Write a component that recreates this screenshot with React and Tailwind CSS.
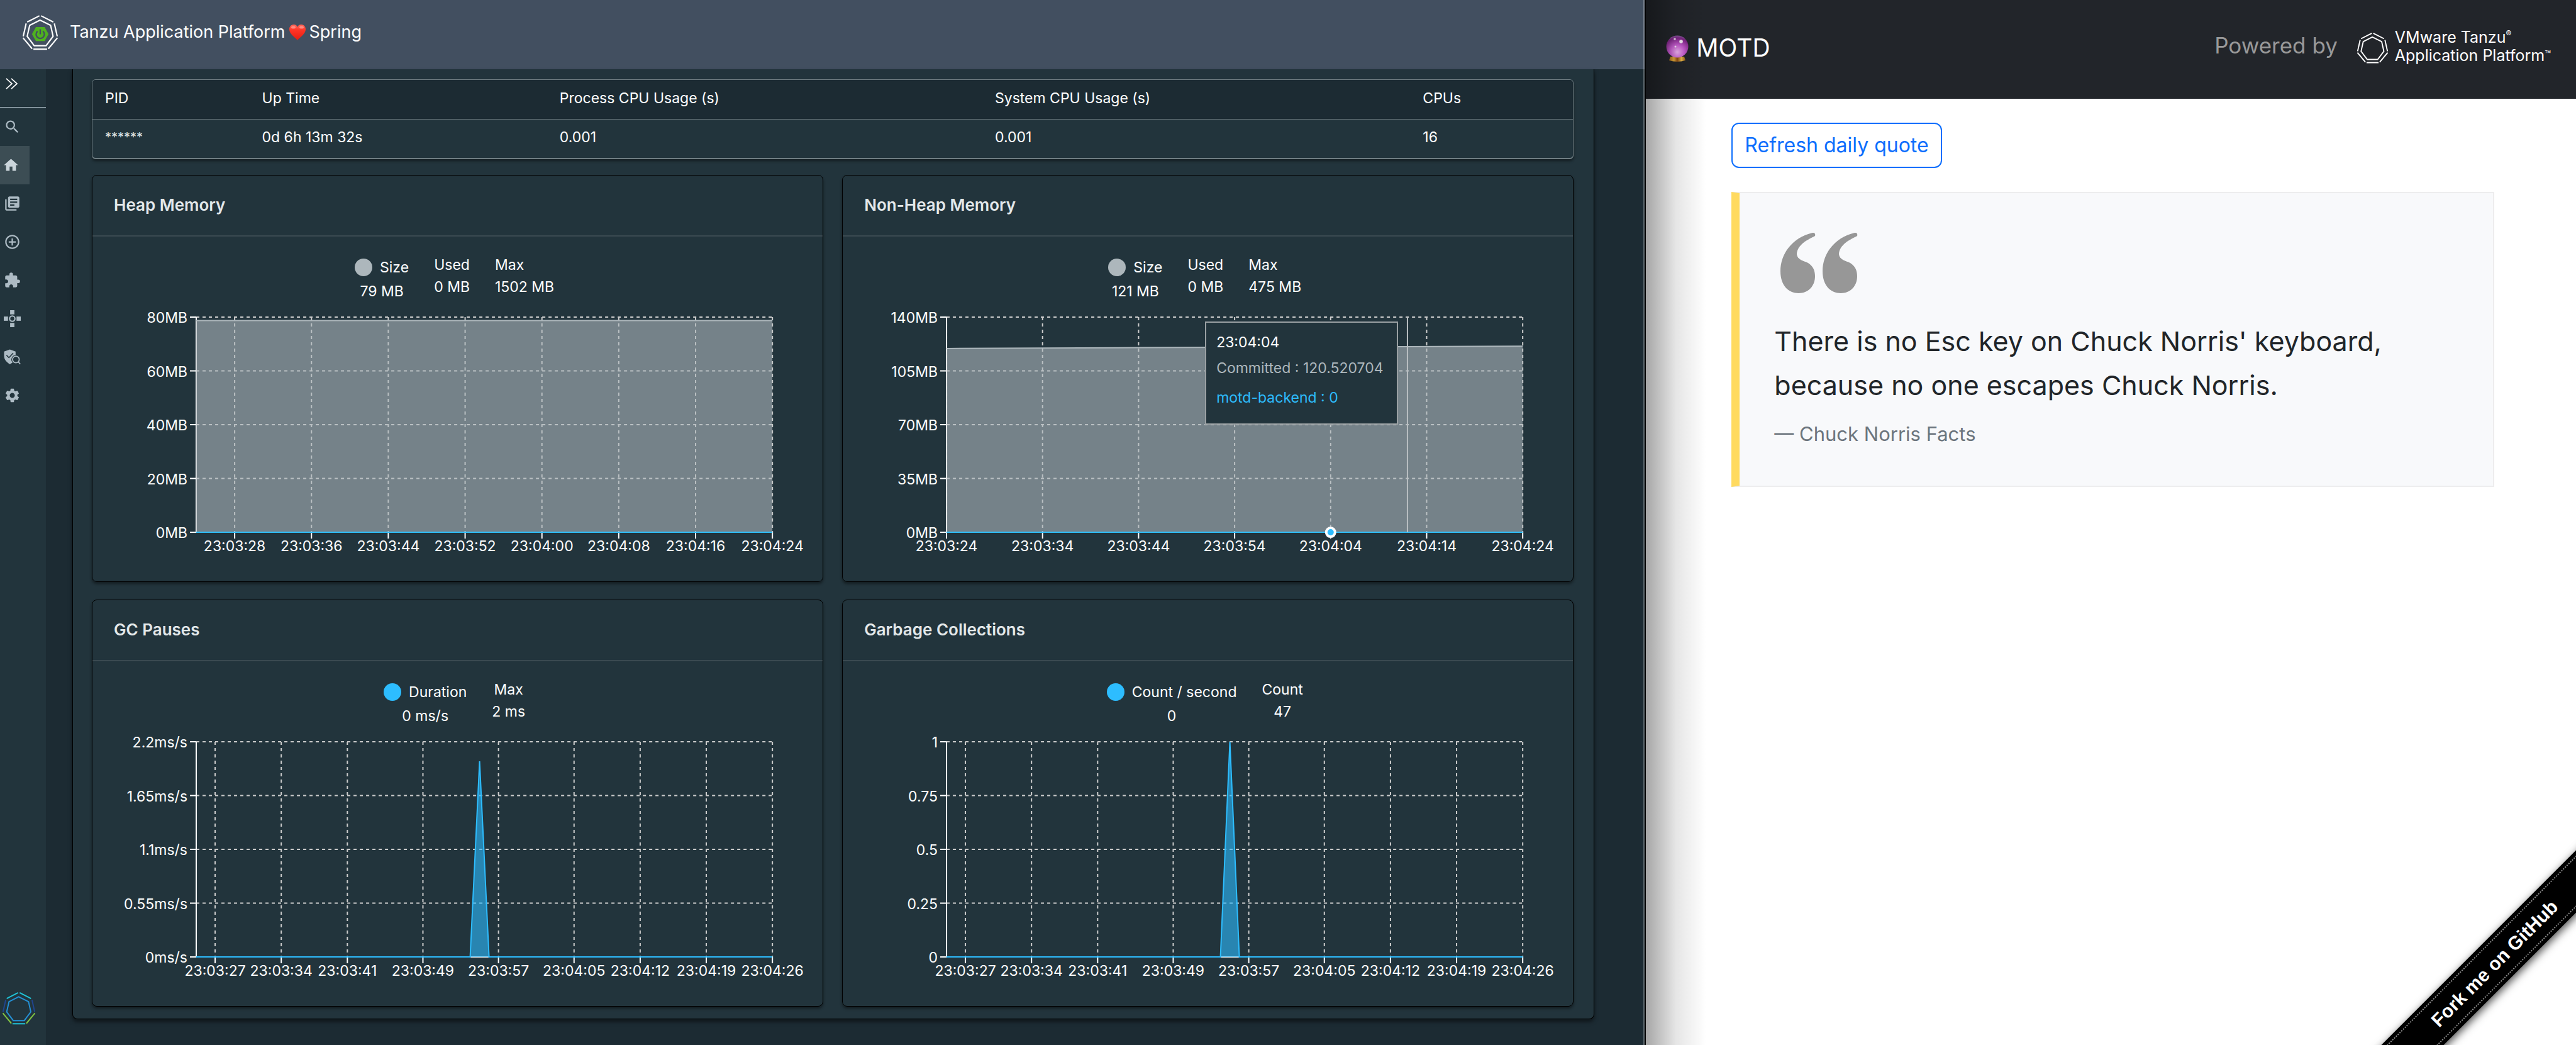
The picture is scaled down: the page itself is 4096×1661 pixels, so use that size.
import React from "react";
import { MdSearch, MdHome, MdLibraryBooks, MdAddCircleOutline, MdExtension, MdSettings } from "react-icons/md";

const HEPTAGON = "M87 27 L138 52 L150 105 L116 150 L59 150 L25 105 L37 52 Z";

function TanzuLogo({ className, top, side, low, inner, children }) {
  return (
    <svg viewBox="0 0 176 172" className={className} fill="none" strokeWidth="6.5" aria-hidden="true">
      <path d="M84 6 L25 36 M92 6 L151 36 M55 167 L121 167" stroke={top} />
      <path d="M20 43 L6 105 M156 43 L170 105" stroke={side} />
      <path d="M5 112 L49 165 M171 112 L127 165" stroke={low} />
      <path d={HEPTAGON} stroke={inner} />
      {children}
    </svg>
  );
}

function WhiteTanzuLogo({ className, children }) {
  return (
    <TanzuLogo className={className} top="#fff" side="#fff" low="#fff" inner="#fff">
      {children}
    </TanzuLogo>
  );
}

function Heart() {
  return (
    <svg viewBox="0 0 26 25" className="h-[25px] w-[26px]" aria-label="love" role="img">
      <defs>
        <linearGradient id="heart" x1="0" y1="0" x2="0" y2="1">
          <stop offset="0" stopColor="#ff6a5c" />
          <stop offset="0.35" stopColor="#ff3526" />
          <stop offset="1" stopColor="#e51c10" />
        </linearGradient>
      </defs>
      <path d="M13 25 C9 20 0 15 0 7.500 C0 3 3.200 0 7 0 C10 0 12 1.600 13 4 C14 1.600 16 0 19 0 C22.800 0 26 3 26 7.500 C26 15 17 20 13 25 Z" fill="url(#heart)" />
      <ellipse cx="6.500" cy="4.500" rx="3.500" ry="2" fill="#fff" opacity="0.350" />
      <ellipse cx="19.500" cy="4.500" rx="3.500" ry="2" fill="#fff" opacity="0.350" />
    </svg>
  );
}

function CrystalBall() {
  return (
    <svg viewBox="0 0 36 42" className="h-[42px] w-9" aria-hidden="true">
      <defs>
        <radialGradient id="ball" cx="0.5" cy="0.75" r="0.8">
          <stop offset="0" stopColor="#f0b4f2" />
          <stop offset="0.4" stopColor="#c95fd2" />
          <stop offset="0.8" stopColor="#7d2485" />
          <stop offset="1" stopColor="#8d6fa8" />
        </radialGradient>
        <linearGradient id="stand" x1="0" x2="1">
          <stop offset="0" stopColor="#a8701c" />
          <stop offset="0.3" stopColor="#e0a83a" />
          <stop offset="0.5" stopColor="#8f4d12" />
          <stop offset="0.75" stopColor="#e6b649" />
          <stop offset="1" stopColor="#9a6518" />
        </linearGradient>
      </defs>
      <path d="M7 34 H29 L31 40 Q18 44 5 40 Z" fill="url(#stand)" />
      <circle cx="18" cy="18" r="17.500" fill="url(#ball)" />
      <circle cx="24" cy="10" r="2.800" fill="#fff" opacity="0.900" />
      <circle cx="14" cy="6" r="1.800" fill="#fff" opacity="0.800" />
      <circle cx="15" cy="18" r="1.500" fill="#fff" opacity="0.800" />
    </svg>
  );
}

function ChevronsIcon() {
  return (
    <svg viewBox="0 0 20 19" className="h-[18px] w-[19px]" fill="none" stroke="#fff" strokeWidth="1.800" aria-hidden="true">
      <path d="M1 1 L10.500 9.500 L1 18 M9.500 1 L19 9.500 L9.500 18" />
    </svg>
  );
}

function TopologyIcon({ className }) {
  return (
    <svg viewBox="0 0 28 28" className={className} fill="currentColor" aria-hidden="true">
      <rect x="10.500" y="0" width="7" height="7" />
      <rect x="10.500" y="21" width="7" height="7" />
      <rect x="0" y="10.500" width="7" height="7" />
      <rect x="21" y="10.500" width="7" height="7" />
      <circle cx="14" cy="14" r="4.400" fill="none" stroke="currentColor" strokeWidth="2.200" />
    </svg>
  );
}

function ShieldSearchIcon({ className }) {
  return (
    <svg viewBox="0 0 28 26" className={className} aria-hidden="true">
      <path d="M10 0.500 L19.500 4 V9.500 A7.500 7.500 0 0 0 14.500 22 L10 25 C4 21 0.500 17 0.500 11 V4 Z" fill="currentColor" />
      <path d="M4.500 10 L8.500 14 L15.500 6.500" fill="none" stroke="#22343c" strokeWidth="1.600" />
      <circle cx="20" cy="17" r="5.500" fill="none" stroke="currentColor" strokeWidth="1.800" />
      <path d="M23.800 21 L27.200 24.500" stroke="currentColor" strokeWidth="1.800" />
    </svg>
  );
}

const NAV = [
  { label: "Search", Icon: MdSearch },
  { label: "Home", Icon: MdHome, active: true },
  { label: "Docs", Icon: MdLibraryBooks },
  { label: "Create", Icon: MdAddCircleOutline },
  { label: "Plugins", Icon: MdExtension },
  { label: "Supply chains", Icon: TopologyIcon },
  { label: "Security", Icon: ShieldSearchIcon },
  { label: "Settings", Icon: MdSettings },
];

function Sidebar() {
  return (
    <aside className="flex w-[73px] shrink-0 flex-col bg-[#22343c]">
      <button type="button" aria-label="Expand" className="flex h-[61px] items-start border-b border-[#b4c3cc] pt-3.5 pl-[9px]">
        <ChevronsIcon />
      </button>
      <nav className="flex flex-col">
        {NAV.map(({ label, Icon, active }) => (
          <a
            key={label}
            href="#"
            aria-label={label}
            className={
              active
                ? "flex h-[61px] w-[47px] items-center bg-[#3c4d54] pl-1 text-[#cbd5db]"
                : "flex h-[61px] w-[47px] items-center pl-1.5 text-[#adbbc4]"
            }
          >
            <Icon className="h-[27px] w-[27px]" />
          </a>
        ))}
      </nav>
      <TanzuLogo className="mt-auto mb-8 ml-[3px] h-[53px] w-[54px]" top="#1fc4d8" side="#20458f" low="#80c343" inner="#2490d4" />
    </aside>
  );
}

const COLUMNS = [
  { head: "PID", value: "******", width: "w-[10.6%]" },
  { head: "Up Time", value: "0d 6h 13m 32s", width: "w-[20.1%]" },
  { head: "Process CPU Usage (s)", value: "0.001", width: "w-[29.4%]" },
  { head: "System CPU Usage (s)", value: "0.001", width: "w-[28.9%]" },
  { head: "CPUs", value: "16", width: "w-[11%]" },
];

function ProcessTable() {
  return (
    <div className="overflow-hidden rounded-md border border-[#6f7d82] border-b-2 shadow-[0_3px_4px_rgba(0,0,0,0.45)]">
      <table className="w-full table-fixed text-left">
        <thead className="border-b border-[#6f7d82] bg-[#1c2b33]">
          <tr>
            {COLUMNS.map((c) => (
              <th key={c.head} scope="col" className={c.width + " h-[62px] pb-1 pl-5 font-normal"}>
                {c.head}
              </th>
            ))}
          </tr>
        </thead>
        <tbody>
          <tr>
            {COLUMNS.map((c) => (
              <td key={c.head} className={c.head === "PID" ? "h-[62px] pb-1 pl-5 text-xl text-[#dfe4e6]" : "h-[62px] pb-1 pl-5"}>
                {c.value}
              </td>
            ))}
          </tr>
        </tbody>
      </table>
    </div>
  );
}

const LEFT = 165;
const RIGHT = 1081;
const TOP = 15;
const BOTTOM = 357;

function Chart({ label, yTicks, xTicks, span, points, color, baseline, cursor, dot }) {
  const x = (t) => LEFT + ((RIGHT - LEFT) * t) / span;
  const y = (v) => BOTTOM - (BOTTOM - TOP) * v;
  const line = points.map(([t, v]) => x(t) + "," + y(v)).join(" ");
  return (
    <svg viewBox="0 0 1161 396" className="block w-full" role="img" aria-label={label}>
      <g stroke="#ccc" strokeWidth="2" strokeDasharray="5 5">
        {yTicks.map((t, i) => (
          <line key={t} x1={LEFT} x2={RIGHT} y1={y(i / 4)} y2={y(i / 4)} />
        ))}
        {xTicks.map(([t]) => (
          <line key={t} x1={x(t)} x2={x(t)} y1={TOP} y2={BOTTOM} />
        ))}
      </g>
      <g stroke="#fff" strokeWidth="2">
        <line x1={LEFT} x2={LEFT} y1={TOP} y2={BOTTOM} />
        <line x1={LEFT} x2={RIGHT} y1={BOTTOM} y2={BOTTOM} />
        {yTicks.map((t, i) => (
          <line key={t} x1={LEFT - 10} x2={LEFT} y1={y(i / 4)} y2={y(i / 4)} />
        ))}
        {xTicks.map(([t]) => (
          <line key={t} x1={x(t)} x2={x(t)} y1={BOTTOM} y2={BOTTOM + 10} />
        ))}
      </g>
      <polygon points={LEFT + "," + BOTTOM + " " + line + " " + RIGHT + "," + BOTTOM} fill={color} fillOpacity="0.6" />
      <polyline points={line} fill="none" stroke={color} strokeWidth="2" />
      {baseline && <line x1={LEFT} x2={RIGHT} y1={BOTTOM} y2={BOTTOM} stroke="#2dbdff" strokeWidth="2" />}
      {cursor && <line x1={x(cursor)} x2={x(cursor)} y1={TOP} y2={BOTTOM} stroke="#b9bfc2" strokeWidth="2" />}
      {dot && <circle cx={x(dot)} cy={BOTTOM} r="7" fill="#2dbdff" stroke="#fff" strokeWidth="4" />}
      <g fill="#fff" fontSize="23">
        {yTicks.map((t, i) => (
          <text key={t} x={LEFT - 14} y={y(i / 4) + 9} textAnchor="end">
            {t}
          </text>
        ))}
        {xTicks.map(([t, text]) => (
          <text key={t} x={x(t)} y={BOTTOM + 30} textAnchor="middle">
            {text}
          </text>
        ))}
      </g>
    </svg>
  );
}

function Legend({ dot, items, centered }) {
  const [first, ...rest] = items;
  return (
    <div className="flex justify-center gap-10 pr-2.5 leading-[35px]">
      <div className="text-center">
        <div className="flex h-[42px] items-center gap-3">
          <span className={"size-7 rounded-full " + dot} />
          {first[0]}
        </div>
        <div>{first[1]}</div>
      </div>
      {rest.map(([name, value]) => (
        <div key={name} className={centered ? "text-center" : "text-left"}>
          <div>{name}</div>
          <div>{value}</div>
        </div>
      ))}
    </div>
  );
}

function Card({ title, children }) {
  return (
    <section className="rounded-lg border border-black shadow-[0_3px_4px_rgba(0,0,0,0.45)]">
      <h2 className="border-b-2 border-[#3a4a51] px-[34px] pt-7 pb-[30px] text-[26px] leading-[37px] font-semibold text-[#e3e8ea]">{title}</h2>
      <div className="pt-7 pb-[39px]">{children}</div>
    </section>
  );
}

const GRAY = "#adb7bc";
const BLUE = "#2dbdff";
const HEAP_TICKS = [[4, "23:03:28"], [12, "23:03:36"], [20, "23:03:44"], [28, "23:03:52"], [36, "23:04:00"], [44, "23:04:08"], [52, "23:04:16"], [60, "23:04:24"]];
const NON_HEAP_TICKS = [[0, "23:03:24"], [10, "23:03:34"], [20, "23:03:44"], [30, "23:03:54"], [40, "23:04:04"], [50, "23:04:14"], [60, "23:04:24"]];
const GC_TICKS = [[2, "23:03:27"], [9, "23:03:34"], [16, "23:03:41"], [24, "23:03:49"], [32, "23:03:57"], [40, "23:04:05"], [47, "23:04:12"], [54, "23:04:19"], [61, "23:04:26"]];

function Tooltip() {
  return (
    <div className="absolute top-[22px] left-[49.6%] flex w-[307px] flex-col border-2 border-[#9aa0a3] bg-[#22343c] px-4 pt-3.5 pb-[17px] leading-[35px] whitespace-nowrap">
      <p>23:04:04</p>
      <p className="mt-1.5 text-[#adb7bc]">Committed : 120.520704</p>
      <p className="mt-3 mb-[6px] text-[#2dbdff]">motd-backend : 0</p>
    </div>
  );
}

function Dashboard() {
  return (
    <div className="relative flex w-[63.9%] shrink-0 flex-col border-r-2 border-black bg-[#1c2b33] font-['Inter','Liberation_Sans',sans-serif] text-[23px] text-white">
      <header className="flex h-[110px] items-center gap-[18px] bg-[#424f60] pb-2 pl-[35px] text-[27px]">
        <WhiteTanzuLogo className="h-[57px] w-[58px]">
          <path d="M67 60 H109 L128 94 L109 128 H67 L48 94 Z" fill="#4fb21e" />
          <path d="M75 80 A20 20 0 1 0 101 80 M88 71 V95" stroke="#424f60" strokeWidth="7" />
        </WhiteTanzuLogo>
        <h1 className="flex items-center gap-1.5">
          Tanzu Application Platform <Heart /> Spring
        </h1>
      </header>
      <div className="flex grow">
        <Sidebar />
        <main className="grow pr-[80px] pl-[42px]">
          <div className="rounded-b-lg border border-t-0 border-black bg-[#22343c] pt-4 pr-8 pb-[19px] pl-[30px] shadow-[0_4px_6px_rgba(0,0,0,0.5)]">
            <ProcessTable />
            <div className="mt-[25px] grid grid-cols-2 gap-x-[30px] gap-y-7">
              <Card title="Heap Memory">
                <Legend dot="bg-[#adb7bc]" items={[["Size", "79 MB"], ["Used", "0 MB"], ["Max", "1502 MB"]]} />
                <div className="mt-2">
                  <Chart label="Heap memory over time" yTicks={["0MB", "20MB", "40MB", "60MB", "80MB"]} xTicks={HEAP_TICKS} span={60} points={[[0, 0.984], [60, 0.984]]} color={GRAY} baseline />
                </div>
              </Card>
              <Card title="Non-Heap Memory">
                <Legend dot="bg-[#adb7bc]" items={[["Size", "121 MB"], ["Used", "0 MB"], ["Max", "475 MB"]]} />
                <div className="relative mt-2">
                  <Chart
                    label="Non-heap memory over time"
                    yTicks={["0MB", "35MB", "70MB", "105MB", "140MB"]}
                    xTicks={NON_HEAP_TICKS}
                    span={60}
                    points={[[0, 0.854], [10, 0.856], [20, 0.858], [40, 0.861], [60, 0.865]]}
                    color={GRAY}
                    baseline
                    cursor={48}
                    dot={40}
                  />
                  <Tooltip />
                </div>
              </Card>
              <Card title="GC Pauses">
                <Legend centered dot="bg-[#2dbdff]" items={[["Duration", "0 ms/s"], ["Max", "2 ms"]]} />
                <div className="mt-2">
                  <Chart label="GC pauses over time" yTicks={["0ms/s", "0.55ms/s", "1.1ms/s", "1.65ms/s", "2.2ms/s"]} xTicks={GC_TICKS} span={61} points={[[0, 0], [29, 0], [30, 0.909], [31, 0], [61, 0]]} color={BLUE} />
                </div>
              </Card>
              <Card title="Garbage Collections">
                <Legend centered dot="bg-[#2dbdff]" items={[["Count / second", "0"], ["Count", "47"]]} />
                <div className="mt-2">
                  <Chart label="Garbage collections over time" yTicks={["0", "0.25", "0.5", "0.75", "1"]} xTicks={GC_TICKS} span={61} points={[[0, 0], [29, 0], [30, 1], [31, 0], [61, 0]]} color={BLUE} />
                </div>
              </Card>
            </div>
          </div>
        </main>
      </div>
      <div className="absolute inset-y-0 right-0 w-0.5 bg-white/30" />
    </div>
  );
}

function QuoteMark() {
  const mark = "M51 0 C54 -1 56 2 55 5 C44 11 27 18 26 34 C27 43 36 44 44 48 C52 53 55 60 55 69 C55 85 44 96 29 96 C13 96 0 84 0 61 C0 34 18 8 51 0 Z";
  return (
    <svg viewBox="0 0 123 96" className="ml-2.5 h-24 w-[123px]" fill="#979797" aria-hidden="true">
      <path d={mark} />
      <path d={mark} transform="translate(67 0)" />
    </svg>
  );
}

function Ribbon() {
  return (
    <div className="pointer-events-none absolute right-0 bottom-0 size-[360px] overflow-hidden">
      <a
        href="#"
        className="pointer-events-auto absolute top-[195px] left-[-70px] flex h-[70px] w-[600px] -rotate-45 flex-col justify-center bg-black py-1.5 text-center font-['Liberation_Sans',Arial,sans-serif] text-[30px] font-bold text-white shadow-[0_4px_14px_rgba(0,0,0,0.7)]"
      >
        <span className="flex grow items-center justify-center border-y-2 border-dotted border-[#8c8c8c]">Fork me on GitHub</span>
      </a>
    </div>
  );
}

function Motd() {
  return (
    <div className="relative grow overflow-hidden bg-white font-['Inter','Liberation_Sans',sans-serif]">
      <header className="flex h-[157px] items-center justify-between bg-[#22252a] pr-10 pb-1 pl-8">
        <a href="#" className="flex items-center gap-3 text-[39px] text-white">
          <CrystalBall />
          MOTD
        </a>
        <div className="flex items-center">
          <span className="pb-2 text-[35px] text-[#999]">Powered by</span>
          <a href="#" className="ml-[30px] flex items-center gap-2.5 text-[25px] leading-[29px] text-white">
            <WhiteTanzuLogo className="mt-0.5 mb-1 h-[50px] w-[51px]" />
            <span className="mb-1.5 flex flex-col">
              <span className="flex">
                VMware Tanzu<sup className="top-0 text-[13px] leading-4">®</sup>
              </span>
              <span className="flex">
                Application Platform<sup className="top-0 text-[16px] leading-6">™</sup>
              </span>
            </span>
          </a>
        </div>
      </header>
      <main className="pt-[38px] pr-[130px] pl-[136px]">
        <button type="button" className="h-[72px] rounded-xl border-2 border-[#0d6efd] px-[19px] text-[32px] text-[#0d6efd]">
          Refresh daily quote
        </button>
        <blockquote className="mt-[38px] border-2 border-l-[13px] border-[#ededee] border-l-[#ffda5f] bg-[#f8f9fb] px-[55px] pt-[63px] pb-[62px]">
          <QuoteMark />
          <p className="mt-[41px] text-[43px] leading-[70px] text-[#212529]">There is no Esc key on Chuck Norris' keyboard, because no one escapes Chuck Norris.</p>
          <footer className="mt-[23px] text-[31px] leading-10 text-[#6c757d]">— Chuck Norris Facts</footer>
        </blockquote>
      </main>
      <Ribbon />
      <div className="pointer-events-none absolute inset-y-0 left-0 w-24 bg-linear-to-r from-black/35 via-black/10 to-transparent" />
    </div>
  );
}

export default function App() {
  return (
    <div className="flex min-h-screen">
      <Dashboard />
      <Motd />
    </div>
  );
}
